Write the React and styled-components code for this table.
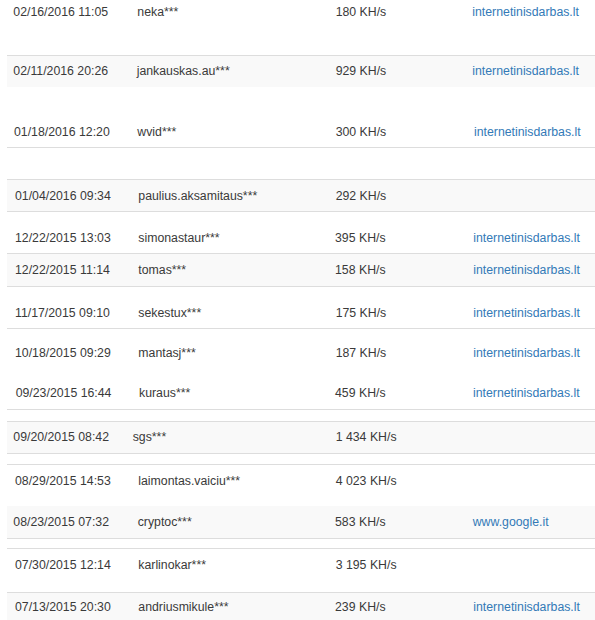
import React from "react";
import styled, { createGlobalStyle } from "styled-components";

const GlobalStyle = createGlobalStyle`
  html, body {
    margin: 0;
    padding: 0;
    background: #fff;
  }
  body {
    font-family: "Liberation Sans", Arial, sans-serif;
    font-size: 12.3px;
    color: #3a3a3a;
  }
`;

// gap rows are empty bands; h includes the top border
const rows = [
  { h: 55, pad: 4.2, date: "02/16/2016 11:05", user: "neka***", rate: "180 KH/s", link: "internetinisdarbas.lt", dx: [-0.7, -0.7, 0.7, 0.3] },
  { h: 32, pad: 7.2, line: true, grey: true, date: "02/11/2016 20:26", user: "jankauskas.au***", rate: "929 KH/s", link: "internetinisdarbas.lt", dx: [-0.7, -1.3, 0.7, 0.3] },
  { h: 60, pad: 36.8, date: "01/18/2016 12:20", user: "wvid***", rate: "300 KH/s", link: "internetinisdarbas.lt", dx: [0, -0.7, 0.7, 2] },
  { gap: true, h: 32, line: true },
  { h: 32, pad: 8.2, line: true, grey: true, date: "01/04/2016 09:34", user: "paulius.aksamitaus***", rate: "292 KH/s", dx: [1, 0.3, 0.7, 0] },
  { h: 42, pad: 18.2, line: true, date: "12/22/2015 13:03", user: "simonastaur***", rate: "395 KH/s", link: "internetinisdarbas.lt", dx: [1, 0.3, 0, 1.3] },
  { h: 33, pad: 8.2, line: true, grey: true, date: "12/22/2015 11:14", user: "tomas***", rate: "158 KH/s", link: "internetinisdarbas.lt", dx: [1, 0.3, 0, 1.3] },
  { h: 42, pad: 17.9, line: true, date: "11/17/2015 09:10", user: "sekestux***", rate: "175 KH/s", link: "internetinisdarbas.lt", dx: [1, 0.3, 0.7, 1.3] },
  { h: 45, pad: 16.2, line: true, date: "10/18/2015 09:29", user: "mantasj***", rate: "187 KH/s", link: "internetinisdarbas.lt", dx: [1, 0.3, 0.7, 1.3] },
  { h: 36, pad: 12.2, date: "09/23/2015 16:44", user: "kuraus***", rate: "459 KH/s", link: "internetinisdarbas.lt", dx: [1.7, 1, 0, 1] },
  { gap: true, h: 12, line: true },
  { h: 32, pad: 7.2, line: true, grey: true, date: "09/20/2015 08:42", user: "sgs***", rate: "1 434 KH/s", dx: [-0.7, -5.3, 0.7, 0] },
  { gap: true, h: 11, line: true },
  { h: 42, pad: 8.2, line: true, date: "08/29/2015 14:53", user: "laimontas.vaiciu***", rate: "4 023 KH/s", dx: [1, 0.3, 0.7, 0] },
  { h: 32, pad: 8.2, grey: true, date: "08/23/2015 07:32", user: "cryptoc***", rate: "583 KH/s", link: "www.google.it", dx: [-0.7, -0.3, 0, 0.7] },
  { gap: true, h: 10, line: true },
  { h: 44, pad: 8.2, line: true, date: "07/30/2015 12:14", user: "karlinokar***", rate: "3 195 KH/s", dx: [1, 0.3, 0.7, 0] },
  { h: 40, pad: 6.2, line: true, grey: true, date: "07/13/2015 20:30", user: "andriusmikule***", rate: "239 KH/s", link: "internetinisdarbas.lt", dx: [1, 0.3, 0, 1.3] },
];

export default function App() {
  return (
    <>
      <GlobalStyle />
      <Table>
        {rows.map((r, i) =>
          r.gap ? (
            <Gap key={i} $h={r.h} $line={r.line} />
          ) : (
            <Row key={i} $h={r.h} $pad={r.pad} $line={r.line} $grey={r.grey}>
              <Cell $dx={r.dx[0]}>{r.date}</Cell>
              <Cell $dx={r.dx[1]}>{r.user}</Cell>
              <Cell $dx={r.dx[2]}>{r.rate}</Cell>
              <Cell $dx={r.dx[3]}>
                {r.link && <Link href="#">{r.link}</Link>}
              </Cell>
            </Row>
          )
        )}
      </Table>
    </>
  );
}

const Table = styled.div`
  display: flex;
  flex-direction: column;
  margin-left: 7px;
  width: 588px;
  height: 620px;
  overflow: hidden;
`;

const Gap = styled.div`
  box-sizing: border-box;
  height: ${(p) => p.$h}px;
  border-top: ${(p) => (p.$line ? "1px solid #ddd" : "none")};
  flex-shrink: 0;
`;

const Row = styled.div`
  box-sizing: border-box;
  flex-shrink: 0;
  display: grid;
  grid-template-columns: 124px 197px 137px 1fr;
  align-items: start;
  height: ${(p) => p.$h}px;
  padding-top: ${(p) => p.$pad}px;
  border-top: ${(p) => (p.$line ? "1px solid #ddd" : "none")};
  background: ${(p) => (p.$grey ? "#f9f9f9" : "#fff")};
`;

const Cell = styled.div`
  padding-left: 7px;
  margin-left: ${(p) => p.$dx}px;
  line-height: 17px;
  white-space: nowrap;
`;

const Link = styled.a`
  color: #337ab7;
  text-decoration: none;
`;
